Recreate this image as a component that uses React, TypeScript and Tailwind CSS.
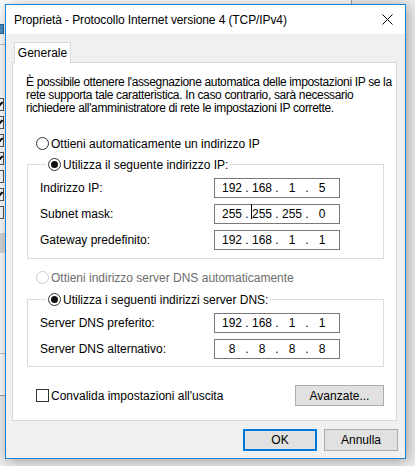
import React from 'react';

type IpProps = { parts: string[]; caretAt?: number };

const IpBox: React.FC<IpProps> = ({ parts, caretAt }) => (
  <div className="w-[126px] h-[20px] border border-[#7a7a7a] bg-white flex items-center pl-[5px]">
    {parts.map((p, i) => (
      <React.Fragment key={i}>
        <span className="w-[24px] text-center relative">
          {caretAt === i && (
            <span className="absolute left-[1px] top-[-1px] w-px h-[15px] bg-black" />
          )}
          {p}
        </span>
        {i < 3 && <span className="w-[6px] text-center">.</span>}
      </React.Fragment>
    ))}
  </div>
);

const Radio: React.FC<{ checked?: boolean; disabled?: boolean; label: string }> = ({
  checked,
  disabled,
  label,
}) => (
  <div className="flex items-center h-[15px]">
    <span
      className={`w-[13px] h-[13px] rounded-full border bg-white flex items-center justify-center ${
        disabled ? 'border-[#cccccc]' : 'border-[#333333]'
      }`}
    >
      {checked && <span className="w-[7px] h-[7px] rounded-full bg-[#111111]" />}
    </span>
    <span className={`ml-[2px] whitespace-nowrap ${disabled ? 'text-[#6d6d6d]' : 'text-black'}`}>{label}</span>
  </div>
);

const Row: React.FC<{ label: string; parts: string[]; caretAt?: number }> = ({ label, parts, caretAt }) => (
  <div className="flex items-center h-[20px]">
    <span className="w-[174px]">{label}</span>
    <IpBox parts={parts} caretAt={caretAt} />
  </div>
);

export default function App() {
  return (
    <div className="relative w-[415px] h-[466px] overflow-hidden bg-[#eeeeee] font-['Liberation_Sans',Arial,sans-serif] text-[12px] text-black">
      {/* window behind the dialog */}
      <div className="absolute left-0 top-0 w-[352px] h-[396px] bg-white border-r border-b border-[#a0a0a0]">
        <div className="absolute left-[-8px] top-[24px] w-[12px] h-[10px] bg-[#4a90c8] border border-[#2d6a9a]" />
        <div className="absolute left-0 top-[44px] w-[5px] h-px bg-[#c8c8c8]" />
        <div className="absolute left-[-9px] top-[98px] flex flex-col gap-[5px]">
          {[true, true, true, true, false, true, false].map((c, i) => (
            <span key={i} className="w-[13px] h-[13px] border border-[#555555] bg-white flex items-center justify-end pr-[1px]">
              {c && <span className="w-[3px] h-[5px] border-r-2 border-b-2 border-black rotate-45 -mt-[2px]" />}
            </span>
          ))}
        </div>
        <div className="absolute left-0 top-[233px] w-[5px] h-[20px] bg-[#d9d9d9]" />
        <div className="absolute left-0 top-[353px] w-[5px] h-px bg-[#c8c8c8]" />
      </div>

      {/* dialog */}
      <div className="absolute left-[5px] top-[4px] w-[401px] h-[455px] border border-[#1883d7] bg-[#f0f0f0] flex flex-col shadow-[2px_2px_14px_rgba(0,0,0,0.35)]">
        <div className="h-[29px] shrink-0 bg-white flex items-center pl-[8px]">
          <span className="flex-1 tracking-[-0.1px]">Proprietà - Protocollo Internet versione 4 (TCP/IPv4)</span>
          <svg width="11" height="11" viewBox="0 0 11 11" className="mr-[12px]">
            <path d="M0.5 0.5 L10.5 10.5 M10.5 0.5 L0.5 10.5" stroke="#000" strokeWidth="1" />
          </svg>
        </div>

        <div className="pt-[8px] pl-[6px] pr-[8px]">
          <div className="relative z-10 ml-[2px] -mb-px w-[57px] h-[21px] bg-white border-t border-x border-[#d9d9d9] flex items-center justify-center">
            Generale
          </div>
          <div className="h-[359px] bg-white border border-[#d9d9d9] flex flex-col">
            <p className="pt-[13px] pl-[13px] leading-[13px] whitespace-nowrap tracking-[-0.35px]">
              È possibile ottenere l'assegnazione automatica delle impostazioni IP se la
              <br />
              rete supporta tale caratteristica. In caso contrario, sarà necessario
              <br />
              richiedere all'amministratore di rete le impostazioni IP corrette.
            </p>

            <div className="mt-[21px] pl-[23px]">
              <Radio label="Ottieni automaticamente un indirizzo IP" />
            </div>

            <fieldset className="mt-[6px] ml-[14px] w-[357px] border border-[#dcdcdc] pl-[12px] pb-[8px]">
              <legend className="ml-[6px] px-[2px] bg-white">
                <Radio checked label="Utilizza il seguente indirizzo IP:" />
              </legend>
              <div className="mt-[6px] flex flex-col gap-[6px]">
                <Row label="Indirizzo IP:" parts={['192', '168', '1', '5']} />
                <Row label="Subnet mask:" parts={['255', '255', '255', '0']} caretAt={1} />
                <Row label="Gateway predefinito:" parts={['192', '168', '1', '1']} />
              </div>
            </fieldset>

            <div className="mt-[11px] pl-[23px]">
              <Radio disabled label="Ottieni indirizzo server DNS automaticamente" />
            </div>

            <fieldset className="mt-[7px] ml-[14px] w-[357px] border border-[#dcdcdc] pl-[12px] pb-[7px]">
              <legend className="ml-[6px] px-[2px] bg-white">
                <Radio checked label="Utilizza i seguenti indirizzi server DNS:" />
              </legend>
              <div className="mt-[6px] flex flex-col gap-[6px]">
                <Row label="Server DNS preferito:" parts={['192', '168', '1', '1']} />
                <Row label="Server DNS alternativo:" parts={['8', '8', '8', '8']} />
              </div>
            </fieldset>

            <div className="mt-[18px] pl-[23px] pr-[12px] flex items-center justify-between">
              <div className="flex items-center">
                <span className="w-[13px] h-[13px] border border-[#333333] bg-white" />
                <span className="ml-[2px]">Convalida impostazioni all'uscita</span>
              </div>
              <button className="w-[89px] h-[21px] bg-[#e1e1e1] border border-[#adadad]">Avanzate...</button>
            </div>
          </div>
        </div>

        <div className="pt-[8px] pr-[7px] flex justify-end gap-[7px]">
          <button className="w-[74px] h-[22px] bg-[#e1e1e1] border-2 border-[#0078d7]">OK</button>
          <button className="w-[74px] h-[22px] bg-[#e1e1e1] border border-[#adadad]">Annulla</button>
        </div>
      </div>
    </div>
  );
}
